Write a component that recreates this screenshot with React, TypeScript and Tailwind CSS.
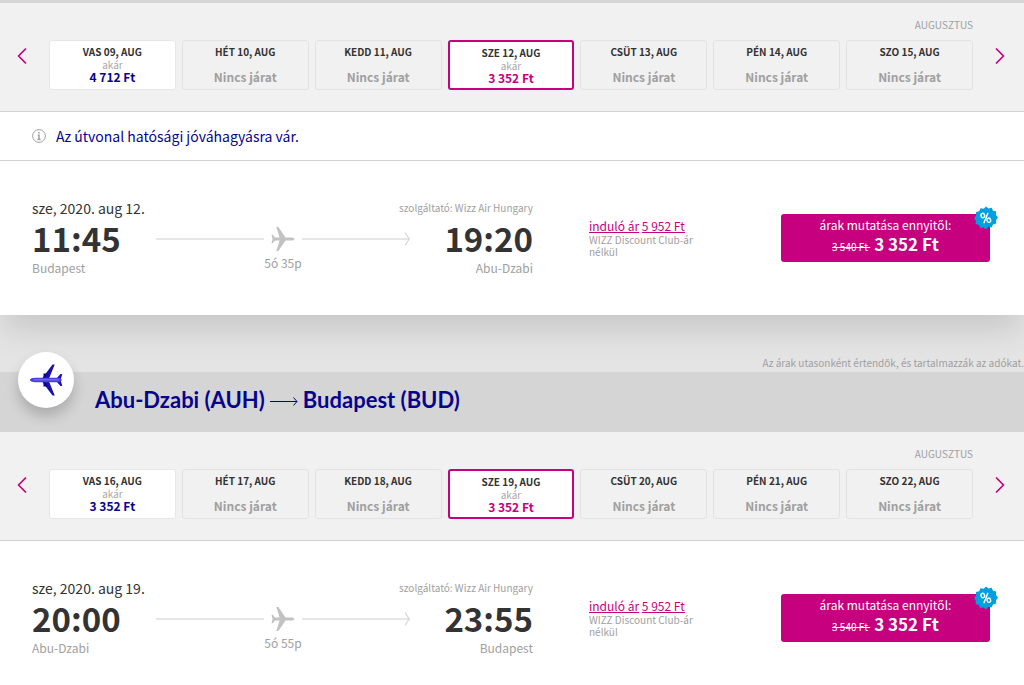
import React from 'react';
import { ChevronLeft, ChevronRight } from 'lucide-react';

interface Day {
  label: string;
  price?: string;
  selected?: boolean;
}

interface Flight {
  date: string;
  departure: string;
  arrival: string;
  from: string;
  to: string;
  duration: string;
}

const OUTBOUND_DAYS: Day[] = [
  { label: 'VAS 09, AUG', price: '4 712 Ft' },
  { label: 'HÉT 10, AUG' },
  { label: 'KEDD 11, AUG' },
  { label: 'SZE 12, AUG', price: '3 352 Ft', selected: true },
  { label: 'CSÜT 13, AUG' },
  { label: 'PÉN 14, AUG' },
  { label: 'SZO 15, AUG' },
];

const RETURN_DAYS: Day[] = [
  { label: 'VAS 16, AUG', price: '3 352 Ft' },
  { label: 'HÉT 17, AUG' },
  { label: 'KEDD 18, AUG' },
  { label: 'SZE 19, AUG', price: '3 352 Ft', selected: true },
  { label: 'CSÜT 20, AUG' },
  { label: 'PÉN 21, AUG' },
  { label: 'SZO 22, AUG' },
];

const OUTBOUND: Flight = {
  date: 'sze, 2020. aug 12.',
  departure: '11:45',
  arrival: '19:20',
  from: 'Budapest',
  to: 'Abu-Dzabi',
  duration: '5ó 35p',
};

const RETURN: Flight = {
  date: 'sze, 2020. aug 19.',
  departure: '20:00',
  arrival: '23:55',
  from: 'Abu-Dzabi',
  to: 'Budapest',
  duration: '5ó 55p',
};

const DayCard: React.FC<{ day: Day }> = ({ day }) => {
  const tone = day.selected
    ? 'border-2 border-[#c6007e] bg-white'
    : day.price
      ? 'border border-[#e6e6e6] bg-white'
      : 'border border-[#e3e3e3]';

  return (
    <button
      type="button"
      aria-pressed={!!day.selected}
      className={`flex h-[50px] min-w-0 flex-col items-center rounded-[3px] pt-1 ${tone}`}
    >
      <span className="text-[10px] leading-[14px] font-bold text-[#333]">{day.label}</span>
      {day.price ? (
        <>
          <span className="text-[10px] leading-[11px] text-[#a9a9a9]">akár</span>
          <span className={`text-[12px] leading-[13px] font-bold ${day.selected ? 'text-[#c6007e]' : 'text-[#06038d]'}`}>
            {day.price}
          </span>
        </>
      ) : (
        <span className="mt-2.5 text-[12px] leading-[16px] font-bold text-[#a0a0a0]">Nincs járat</span>
      )}
    </button>
  );
};

const DayStrip: React.FC<{ days: Day[] }> = ({ days }) => (
  <div className="border-b border-[#d2d2d2] bg-[#f1f1f1] pt-3.5 pb-[21px]">
    <div className="pr-[51px] text-right text-[10px] leading-[16px] text-[#a0a0a0]">AUGUSZTUS</div>
    <div className="mt-[7px] flex items-start">
      <button type="button" aria-label="Előző napok" className="flex h-8 w-[49px] shrink-0 items-center justify-center text-[#c6007e]">
        <ChevronLeft className="mr-1.5 h-7 w-7" strokeWidth={1.5} />
      </button>
      <div className="grid flex-1 grid-cols-7 gap-1.5">
        {days.map((day) => (
          <DayCard key={day.label} day={day} />
        ))}
      </div>
      <button type="button" aria-label="Következő napok" className="flex h-8 w-[51px] shrink-0 items-center justify-center text-[#c6007e]">
        <ChevronRight className="ml-0.5 h-7 w-7" strokeWidth={1.5} />
      </button>
    </div>
  </div>
);

const PlaneIcon: React.FC = () => (
  <svg viewBox="0 0 24 26" className="h-[26px] w-6" fill="#c2c2c2">
    <path d="M23.5 13c0-.8-1.600-1.500-3.400-1.500h-5.600L7.400 1H5.300l3.300 10.500H4L1.800 8.800H.5L1.600 13 .5 17.200h1.300L4 14.500h4.600L5.300 25h2.100l7.100-10.500h5.600c1.800 0 3.400-.7 3.400-1.500z" />
  </svg>
);

const DiscountBadge: React.FC = () => (
  <svg viewBox="0 0 24 24" className="absolute -top-2 -right-2 h-6 w-6">
    <path
      fill="#009fdf"
      d="M12 .5l2.500 2.100 3.200-.9 1.300 3 3.200.9-.2 3.300 2 2.600-2 2.700.2 3.300-3.200.9-1.400 3-3.200-.6L12 23.500l-2.600-2.100-3.200.7-1.400-3-3.100-1 .1-3.200-1.700-2.800 2-2.700-.1-3.300 3.200-.9 1.400-3 3.200.5z"
    />
    <g fill="none" stroke="#fff" strokeWidth="1.400" strokeLinecap="round">
      <ellipse cx="8.800" cy="9.500" rx="1.800" ry="2.200" transform="rotate(-15 8.800 9.500)" />
      <ellipse cx="14.800" cy="14.200" rx="1.800" ry="2.200" transform="rotate(-15 14.800 14.200)" />
      <path d="M13.800 7.300L10 16.700" />
    </g>
  </svg>
);

const FlightRow: React.FC<{ flight: Flight }> = ({ flight }) => (
  <div className="flex h-[154px] items-center bg-white pr-[34px] pl-8">
    <div className="min-w-0 flex-1">
      <div className="flex items-center justify-between leading-[20px]">
        <span className="text-[14px] text-[#333]">{flight.date}</span>
        <span className="text-[10px] text-[#a0a0a0]">szolgáltató: Wizz Air Hungary</span>
      </div>
      <div className="flex">
        <div className="w-[124px]">
          <div className="text-[33px] leading-[40px] font-bold text-[#333]">{flight.departure}</div>
          <div className="text-[12px] leading-[20px] text-[#a0a0a0]">{flight.from}</div>
        </div>
        <div className="flex-1">
          <div className="flex h-[42px] items-center">
            <span className="h-0.5 flex-1 bg-[#e6e6e6]" />
            <span className="mx-[7px]">
              <PlaneIcon />
            </span>
            <span className="h-0.5 flex-1 bg-[#e6e6e6]" />
            <svg viewBox="0 0 6 14" className="-ml-1.5 h-3.5 w-1.5" fill="none" stroke="#d6d6d6" strokeWidth="1.200">
              <path d="M1 .5L5.200 7 1 13.500" />
            </svg>
          </div>
          <div className="-mt-1 text-center text-[12px] leading-[14px] text-[#a0a0a0]">{flight.duration}</div>
        </div>
        <div className="w-[123px] text-right">
          <div className="text-[33px] leading-[40px] font-bold text-[#333]">{flight.arrival}</div>
          <div className="text-[12px] leading-[20px] text-[#a0a0a0]">{flight.to}</div>
        </div>
      </div>
    </div>

    <div className="ml-14 w-32 shrink-0">
      <div className="text-[12px] leading-[16px] whitespace-nowrap text-[#c6007e]">
        <a href="#" className="underline">induló ár</a> <a href="#" className="underline">5 952 Ft</a>
      </div>
      <p className="text-[10px] leading-[12px] text-[#a0a0a0]">
        WIZZ Discount Club-ár
        <br />
        nélkül
      </p>
    </div>

    <button
      type="button"
      className="relative ml-16 flex h-12 w-[209px] shrink-0 flex-col items-center rounded-[3px] bg-[#c6007e] pt-0.5 text-white"
    >
      <span className="text-[12px] leading-[18px]">árak mutatása ennyitől:</span>
      <span className="flex items-baseline gap-1 leading-[20px]">
        <s className="text-[10px]">3 540 Ft&nbsp;</s>
        <strong className="text-[17px] font-bold">3 352 Ft</strong>
      </span>
      <DiscountBadge />
    </button>
  </div>
);

const RouteHeader: React.FC = () => (
  <div className="relative flex h-[60px] items-center bg-[#d5d5d5] pb-[5px] pl-[95px]">
    <div className="absolute -top-5 left-[18px] flex h-14 w-14 items-center justify-center rounded-full bg-white shadow-[0_8px_14px_rgba(0,0,0,0.2)]">
      <svg viewBox="0 0 34 34" className="h-[34px] w-[34px]">
        <path fill="#1a0dab" d="M13 15.500L23.500 1.500h2.200L20 15.500zM13 18.500L23.500 32.500h2.200L20 18.500zM27.500 15.500L31.500 11h1.800L31.500 17l1.800 6h-1.800l-4-4.500z" />
        <path fill="#06038d" d="M14.500 10.500h3v2.500l-2.500 2h-.5zM14.500 23.500h3V21L15 19h-.5z" />
        <path fill="#4a3fe0" d="M1 17c0-1.400 2.500-2.200 5-2.200h25l2 2.200-2 2.200H6c-2.500 0-5-.8-5-2.200z" />
        <path fill="#8078f0" d="M5 16.300h25v1H5z" />
      </svg>
    </div>
    <h2 className="flex items-center font-[Lato,sans-serif] text-[22px] leading-[28px] font-bold text-[#06038d]">
      Abu-Dzabi (AUH)
      <svg viewBox="0 0 28 12" className="mx-[5px] h-3 w-7" fill="none" stroke="#06038d" strokeWidth="1">
        <path d="M0 7.500h27M23.500 3.500l3.500 4-3.500 4" />
      </svg>
      Budapest (BUD)
    </h2>
  </div>
);

export default function App() {
  return (
    <main className="min-h-screen bg-white font-['Noto_Sans_CJK_SC','Noto_Sans',sans-serif]">
      <section className="relative border-t-[3px] border-[#d6d6d6] shadow-[0_18px_30px_-4px_rgba(0,0,0,0.13)]">
        <DayStrip days={OUTBOUND_DAYS} />
        <div className="flex h-[49px] items-center border-b border-[#d2d2d2] bg-white pl-8">
          <svg viewBox="0 0 14 14" className="h-3.5 w-3.5" fill="none" stroke="#a0a0a0">
            <circle cx="7" cy="7" r="6.400" />
            <path strokeWidth="1.500" d="M5.800 6.200H7v4.300M5.500 10.500h3M6.900 3v1.500" />
          </svg>
          <p className="ml-2.5 text-[14px] leading-[20px] text-[#06038d]">Az útvonal hatósági jóváhagyásra vár.</p>
        </div>
        <FlightRow flight={OUTBOUND} />
      </section>

      <section>
        <div className="flex h-[57px] items-end justify-end bg-[#e4e4e4]">
          <p className="relative text-[10px] leading-[18px] text-[#a0a0a0]">Az árak utasonként értendők, és tartalmazzák az adókat.</p>
        </div>
        <RouteHeader />
        <DayStrip days={RETURN_DAYS} />
        <FlightRow flight={RETURN} />
      </section>
    </main>
  );
}
